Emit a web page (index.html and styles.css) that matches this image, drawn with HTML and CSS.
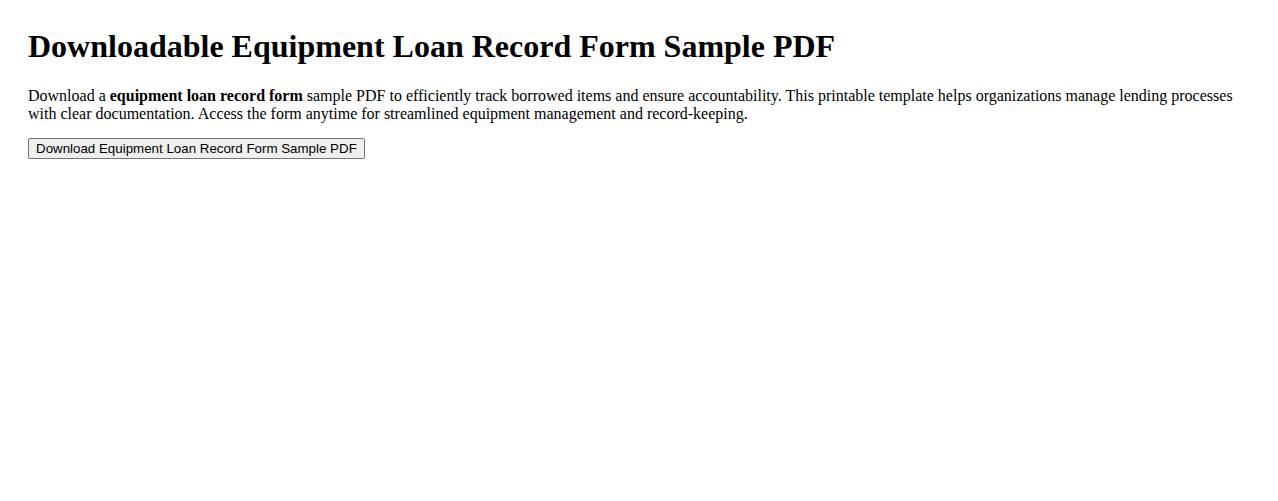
FILE: index.html
```html
<!DOCTYPE html>
<html lang="en">
<head>
  <meta charset="UTF-8">
  <meta name="viewport" content="width=device-width, initial-scale=1.0">
  <title>Equipment Loan Record Form Sample PDF</title>
  <link rel="stylesheet" href="styles.css">
</head>
<body>
  <h1>Downloadable Equipment Loan Record Form Sample PDF</h1>
  <p>Download a <strong>equipment loan record form</strong> sample PDF to efficiently track borrowed items and ensure accountability. This printable template helps organizations manage lending processes with clear documentation. Access the form anytime for streamlined equipment management and record-keeping.</p>
  <button type="button" class="download-btn">Download Equipment Loan Record Form Sample PDF</button>
</body>
</html>
```

FILE: styles.css
```css
body {
  font-family: "Liberation Serif", "Times New Roman", serif;
  font-size: 16px;
  margin: 8px;
  padding: 20px;
  color: #000;
  background: #fff;
}
h1 {
  font-size: 32px;
  margin: 0 0 22px;
}
p {
  margin: 16px 0 15px;
}
.download-btn {
  font-family: "Liberation Sans", Arial, sans-serif;
  font-size: 13.33px;
  padding: 2px 7px;
  background-color: #efefef;
  border: 1px solid #767676;
  border-radius: 2px;
  color: #000;
  cursor: pointer;
}
.download-btn:hover {
  background-color: #e5e5e5;
}
```
